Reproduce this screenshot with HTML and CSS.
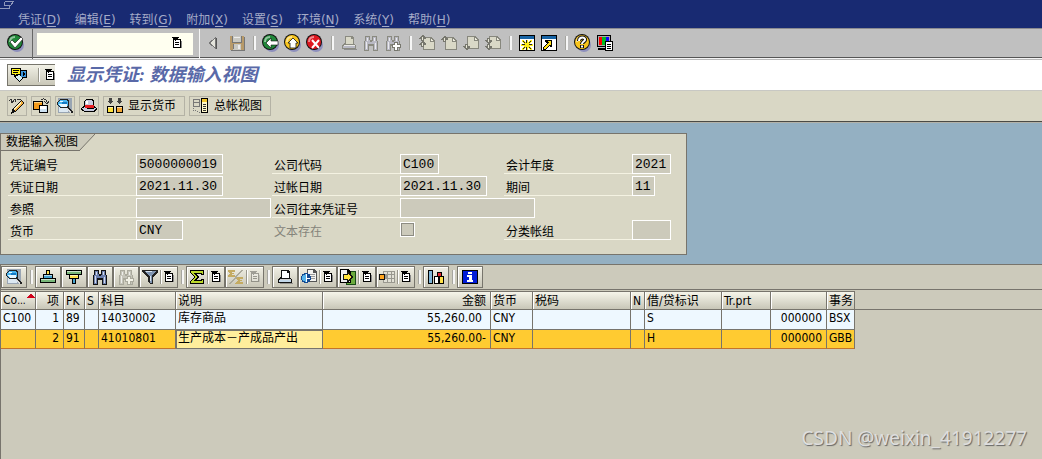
FILE: index.html
```html
<!DOCTYPE html>
<html lang="zh-CN">
<head>
<meta charset="utf-8">
<title>显示凭证: 数据输入视图</title>
<link rel="stylesheet" href="styles.css">
</head>
<body>
<svg class="defs" aria-hidden="true">
  <symbol id="i-list" viewBox="0 0 10 12"><path fill="#888" d="M3 11h7V4h-1v7z"/><path fill="#000" d="M1 2h8v9H1z"/><path fill="#fff" d="M2 3h6v7H2z"/><path fill="#000" d="M0 0h7v1H6v1H5v1H4v1H3V3H2V2H1V1H0zM3 5h4v1H3zM3 7h4v1H3z"/></symbol>
  <symbol id="i-binoc" viewBox="0 0 16 16"><path fill="currentColor" d="M2 1h5v4h2V1h5v4l1 2v9h-5v-5H6v5H1V7l1-2z"/><path fill="var(--fill)" d="M3 2h3v3l1 1h2l1-1V2h3v3l1 2v8h-3V9H5v6H2V7l1-2z"/><path fill="#fff" opacity=".7" d="M4 3h1v3H4zM3 7h1v7H3zM11 3h1v3h-1zM12 8h1v6h-1z"/><path fill="currentColor" d="M7 6h2v1H7z"/></symbol>
  <symbol id="i-printer" viewBox="0 0 16 16"><path fill="currentColor" d="M4 1h7l2 2v6l2 1v4H1v-4l3-2z"/><path fill="var(--paper)" d="M5 2h5v2h2v5H5z"/><path fill="#fff" opacity=".8" d="M3 10h11v1H3z"/><path fill="var(--fill)" d="M2 11h12v2H2z"/><path fill="#777" opacity=".7" d="M3 14h13v1H3z"/></symbol>
  <symbol id="i-page" viewBox="0 0 12 13"><path fill="#87877d" d="M0 0h8l4 4v9H0z"/><path fill="#d9d8c7" d="M1 1h6v4h4v7H1z"/><path fill="#efeee0" d="M8 2l2 2H8z"/></symbol>
  <symbol id="i-up" viewBox="0 0 7 6"><path fill="#77776e" d="M3 0h1l3 3v1H5v2H2V4H0V3z"/><path fill="#e8e7d7" d="M3 2h1v3H3z"/></symbol>
  <symbol id="i-down" viewBox="0 0 7 6"><path fill="#77776e" d="M2 0h3v2h2v1L4 6H3L0 3V2h2z"/><path fill="#e8e7d7" d="M3 1h1v3H3z"/></symbol>
  <symbol id="i-detail" viewBox="0 0 18 16"><path fill="#99a5b3" d="M2 0h14v15H2z"/><path fill="#dce8f2" d="M3 9h9v5H3z"/><path fill="#222" d="M4 1h7l2 2v5l-1 1 5 4v2h-2l-5-5H5L1 7V4z"/><path fill="#48b4ef" d="M4 2h6l2 2v3l-2 2H5L2 7V4z"/><path fill="#e9f8ff" d="M3 6h8v2l-1 1H5zM4 3h3v1H4z"/><path fill="#147ac5" d="M6 4h5v2H6z"/><path fill="#ddd" d="M11 10l4 4-1 1-3-4z"/></symbol>
  <symbol id="i-ball" viewBox="0 0 18 18"><circle cx="10" cy="11" r="7" fill="#8e90bd"/><circle cx="8" cy="8" r="8" fill="#111"/><circle cx="8" cy="8" r="7" fill="var(--ball)"/><path fill="none" stroke="#fff" stroke-opacity=".5" stroke-width="2" d="M3 8c0-3 2-5 5-5"/></symbol>
</svg>

<header class="menubar">
  <svg class="sysicon" viewBox="0 0 14 9" aria-hidden="true"><path fill="none" stroke="#8f98bb" d="M4.500 1.500h9l-3 4h-6v-4M0 8.500h9v-3"/></svg>
  <nav class="menus">
    <button>凭证(<u>D</u>)</button><button>编辑(<u>E</u>)</button><button>转到(<u>G</u>)</button><button>附加(<u>X</u>)</button><button>设置(<u>S</u>)</button><button>环境(<u>N</u>)</button><button>系统(<u>Y</u>)</button><button>帮助(<u>H</u>)</button>
  </nav>
</header>

<section class="sysbar">
  <div class="enter"><button class="tool" aria-label="确认"><svg class="ball green" viewBox="0 0 18 18"><use href="#i-ball"/><path fill="#fff" stroke="#111" stroke-width=".6" d="M3 8l2-2 3 3 6-6 2 2-8 9z"/></svg></button></div>
  <div class="command">
    <div class="combo"><input type="text" aria-label="命令"><button aria-label="历史"><svg class="list"><use href="#i-list"/></svg></button></div>
  </div>
  <div class="tools">
    <button class="tool" aria-label="收起"><svg viewBox="0 0 16 16"><path fill="#e4e4dc" stroke="#777" d="M8.500 2.500v11l-6-5.500z"/><path stroke="#555" d="M9.500 3v11"/></svg></button>
    <button class="tool" aria-label="保存"><svg viewBox="0 0 16 16"><path fill="#b79a6a" d="M1 1h14v14H1z"/><path fill="#c9c9c3" d="M4 1h8v6H4zM4 9h8v6H4z"/><path fill="#777" d="M3 1h1v7H3zM12 1h1v7h-1zM4 7h8v1H4zM15 2h1v14H2v-1h13zM4 9h1v5H4z"/><path fill="#ececec" d="M5 2h6v1H5zM9 10h2v4H9z"/></svg></button>
    <i class="sep"></i>
    <button class="tool" aria-label="返回"><svg class="ball green" viewBox="0 0 18 18"><use href="#i-ball"/><path fill="#fff" stroke="#111" stroke-width=".6" d="M4 9l5-5v3h7v4H9v3z"/></svg></button>
    <button class="tool" aria-label="退出"><svg class="ball yellow" viewBox="0 0 18 18"><use href="#i-ball"/><path fill="#fff" stroke="#111" stroke-width=".8" d="M9 4l5 5h-2v5H6V9H4z"/></svg></button>
    <button class="tool" aria-label="取消"><svg class="ball red" viewBox="0 0 18 18"><use href="#i-ball"/><path fill="none" stroke="#fff" stroke-width="2" d="M6 6l7 8M13 6l-7 8"/></svg></button>
    <i class="sep"></i>
    <button class="tool off" aria-label="打印"><svg viewBox="0 0 16 16"><use href="#i-printer"/></svg></button>
    <button class="tool off" aria-label="查找"><svg viewBox="0 0 16 16"><use href="#i-binoc"/></svg></button>
    <button class="tool off" aria-label="继续查找"><svg viewBox="0 0 16 16"><use href="#i-binoc"/><path fill="#77776e" d="M9 7h4v2h3v4h-3v3H9v-3H7V9h2z"/><path fill="#fff" d="M10 8h2v2h3v2h-3v3h-2v-3H8v-2h2z"/></svg></button>
    <i class="sep"></i>
    <button class="tool" aria-label="首页"><svg viewBox="0 0 16 16"><use href="#i-page" x="4" y="2" width="12" height="13"/><use href="#i-up" x="0" y="0" width="7" height="6"/><use href="#i-up" x="0" y="6" width="7" height="6"/></svg></button>
    <button class="tool" aria-label="上一页"><svg viewBox="0 0 16 16"><use href="#i-page" x="4" y="2" width="12" height="13"/><use href="#i-up" x="0" y="1" width="7" height="6"/></svg></button>
    <button class="tool" aria-label="下一页"><svg viewBox="0 0 16 16"><use href="#i-page" x="4" y="1" width="12" height="13"/><use href="#i-down" x="0" y="9" width="7" height="6"/></svg></button>
    <button class="tool" aria-label="末页"><svg viewBox="0 0 16 16"><use href="#i-page" x="4" y="1" width="12" height="13"/><use href="#i-down" x="0" y="3" width="7" height="6"/><use href="#i-down" x="0" y="9" width="7" height="6"/></svg></button>
    <i class="sep"></i>
    <button class="tool" aria-label="新建会话"><svg viewBox="0 0 16 16"><path d="M0 0h16v16H0z"/><path fill="#fff" d="M1 4h14v11H1z"/><path fill="#1764a5" d="M1 1h14v3H1z"/><path fill="#ffed19" d="M3 5h2v1h1v1h1V5h2v2h1V6h1V5h2v2h-1v1h-1v1h3v2h-3v1h1v1h1v2h-2v-1h-1v-1H9v2H7v-2H6v1H5v1H3v-2h1v-1h1v-1H2V9h3V8H4V7H3z"/><path fill="#222" d="M4 6h1v1H4zM5 7h1v1H5zM7 5h1v3H7zM3 9h3v1H3zM10 9h3v1h-3zM10 7h1v1h-1zM11 6h1v1h-1zM5 12h1v1H5zM4 13h1v1H4zM7 12h1v3H7zM10 12h1v1h-1zM11 13h1v1h-1z"/></svg></button>
    <button class="tool" aria-label="快捷方式"><svg viewBox="0 0 16 16"><path d="M0 0h16v16H0z"/><path fill="#fff" d="M1 4h14v11H1z"/><path fill="#1764a5" d="M1 1h14v3H1z"/><path fill="#000" d="M4 5h7v7H9v-2l-4 5H2v-3l4-4-2-1z"/><path fill="#ffe119" d="M5 6h5v5L9 9l-5 5H3v-2l5-5z"/></svg></button>
    <i class="sep"></i>
    <button class="tool" aria-label="帮助"><svg class="ball yellow" viewBox="0 0 18 18"><use href="#i-ball"/><path fill="none" stroke="#111" stroke-width="4" d="M5 7c0-5 7-4 6-1-1 2-3 2-3 4M8 11v3"/><path fill="none" stroke="#fff" stroke-width="2" d="M5 7c0-5 7-4 6-1-1 2-3 2-3 4M8 11.500v2"/></svg></button>
    <button class="tool" aria-label="布局"><svg viewBox="0 0 16 16"><path d="M0 0h14v12H0zM1 13h13v2H1z"/><path fill="#aaa" d="M1 1h12v10H1z"/><path fill="red" d="M2 2h3v8H2z"/><path fill="#0b2" d="M5 2h4v8H5z"/><path fill="#10f" d="M9 2h3v8H9z"/><path d="M8 6h8v10H8z"/><path fill="#fff" d="M9 7h6v8H9z"/><path d="M10 9h4v1h-4zM10 11h4v1h-4zM10 13h4v1h-4z"/></svg></button>
  </div>
</section>

<section class="titlebar">
  <button class="services" aria-label="对象服务"><svg class="icon" viewBox="0 0 16 16"><path d="M0 1h10v2h6v8h-4l-3 4-4-3-1-2H3V8H0z"/><path fill="#fff219" d="M1 2h8v5H5l-1 2V7H1z"/><path d="M2 3h6v1H2zM2 5h5v1H2z"/><path fill="#3994dc" d="M10 4h5v6h-5z"/><path d="M12 5l2 2-2 2z"/><path fill="#d5eef5" d="M5 9l4-1 2 3-2 3-3-2z"/></svg><i></i><svg class="list"><use href="#i-list"/></svg></button>
  <h1>显示凭证: 数据输入视图</h1>
</section>

<section class="appbar">
  <button aria-label="更改"><svg class="icon" viewBox="0 0 16 16"><path fill="none" stroke="#333" d="M0 3l2-2 1 4 3-4 1 3M8 1l4 1"/><path fill="#111" d="M12 2l3 3-9 9-4 2 1-4z"/><path fill="#f7ad36" d="M12 3l2 2-8 8-2-2z"/><path fill="#fff3bd" d="M11 4l1 1-7 7-1-1z"/></svg></button>
  <button aria-label="其他凭证"><svg class="icon" viewBox="0 0 16 16"><path fill="none" stroke="#333" d="M8 2c2-2 5-1 6 2M11.500 3.500L14 6l2-3"/><path d="M0 3h10v9H0z"/><path fill="#f49b1b" d="M1 4h8v7H1z"/><path fill="#ffd27d" d="M1 4h8v1H1z"/><path d="M6 7h9v8H6z"/><path fill="#cde2f2" d="M7 8h7v6H7z"/><path fill="#fff" d="M7 8h6v3H7z"/></svg></button>
  <button aria-label="明细"><svg class="icon wide" viewBox="0 0 18 16"><use href="#i-detail"/></svg></button>
  <button aria-label="抬头"><svg class="icon" viewBox="0 0 16 16"><path d="M5 1h6l2 2v5l3 2v2l-3 2H4l-4-2v-2l3-2V3z"/><path fill="#c8cbe0" d="M5 2h6l1 2v3H4V3zM1 10l3-1 3 2h4l3-1 1 1-3 2H4l-3-2z"/><path fill="#e51d22" d="M4 7h9v3H4z"/><path fill="#fff" d="M5 3h2v3H5z"/></svg></button>
  <button class="label"><svg class="icon" viewBox="0 0 16 16"><path fill="#444" d="M2 0h3v3h2L3.500 6 0 3h2zM11 0h3v3h2l-3.500 3L9 3h2z"/><path d="M0 8h7v7H0zM9 8h7v7H9z"/><path fill="#ffe13a" d="M1 9h5v5H1z"/><path fill="#f4a632" d="M10 9h5v5h-5z"/><path fill="#fff" opacity=".6" d="M1 9h5v1H1zM10 9h5v1h-5z"/></svg>显示货币</button>
  <button class="label"><svg class="icon" viewBox="0 0 16 16"><path fill="#777" d="M0 1h7v8H0z"/><path fill="#d9d7c5" d="M1 2h5v2H1zM1 5h5v3H1z"/><path fill="none" stroke="#777" stroke-dasharray="1 1" d="M.500 10v2l7 3"/><path d="M8 0h7v15H8z"/><path fill="#fff8c9" d="M9 1h5v13H9z"/><path fill="#f3c62d" d="M9 1h5v3H9z"/><path fill="#333" d="M10 6h3v1h-3zM10 8h3v1h-3zM10 10h3v1h-3zM10 12h3v1h-3z"/></svg>总帐视图</button>
</section>

<main>
  <section class="panel">
    <div class="tab"><h2>数据输入视图</h2><svg viewBox="0 0 16 17" aria-hidden="true"><path fill="#cccabb" d="M0 0h16L0 17z"/><path fill="none" stroke="#77746c" d="M16 0L0 17"/></svg></div>
    <form class="fields">
      <label for="f1">凭证编号</label><input id="f1" class="w10" value="5000000019" readonly>
      <label for="f2">公司代码</label><input id="f2" class="w4" value="C100" readonly>
      <label for="f3">会计年度</label><input id="f3" class="w4" value="2021" readonly>
      <label for="f4">凭证日期</label><input id="f4" class="w10" value="2021.11.30" readonly>
      <label for="f5">过帐日期</label><input id="f5" class="w10" value="2021.11.30" readonly>
      <label for="f6">期间</label><input id="f6" class="w2" value="11" readonly>
      <label for="f7">参照</label><input id="f7" class="w16" readonly>
      <label for="f8">公司往来凭证号</label><input id="f8" class="w16" readonly>
      <span></span><span></span>
      <label for="f9">货币</label><input id="f9" class="w5" value="CNY" readonly>
      <label for="f10" class="disabled">文本存在</label><input id="f10" type="checkbox" disabled>
      <label for="f11">分类帐组</label><input id="f11" class="w4" readonly>
    </form>
  </section>

  <section class="alv">
    <div class="alvbar">
      <button aria-label="明细"><svg class="icon wide" viewBox="0 0 18 16"><use href="#i-detail"/></svg></button>
      <i class="sep"></i>
      <button aria-label="升序"><svg class="icon" viewBox="0 0 16 16"><path d="M6 1h4v4h3v4h3v5H0V9h3V5h3z"/><path fill="#ffe34d" d="M7 2h2v3H7z"/><path fill="#46a4cf" d="M4 6h8v3H4z"/><path fill="#78b779" d="M1 10h14v3H1z"/><path fill="#fff" opacity=".6" d="M4 6h8v1H4zM1 10h14v1H1z"/></svg></button>
      <button aria-label="降序"><svg class="icon" viewBox="0 0 16 16"><path d="M0 1h16v5h-3v4h-3v5H6v-5H3V6H0z"/><path fill="#78b779" d="M1 2h14v3H1z"/><path fill="#ffe34d" d="M4 6h8v3H4z"/><path fill="#46a4cf" d="M7 10h2v4H7z"/><path fill="#fff" opacity=".6" d="M1 2h14v1H1zM4 6h8v1H4z"/></svg></button>
      <button aria-label="查找"><svg class="icon" viewBox="0 0 16 16"><use href="#i-binoc"/></svg></button>
      <button class="off" aria-label="继续查找"><svg class="icon" viewBox="0 0 16 16"><use href="#i-binoc"/><path fill="#aaa99c" d="M9 7h4v2h3v4h-3v3H9v-3H7V9h2z"/><path fill="#f2f1e6" d="M10 8h2v2h3v2h-3v3h-2v-3H8v-2h2z"/></svg></button>
      <button class="split" aria-label="过滤"><svg class="icon" viewBox="0 0 16 16"><path fill="#222" d="M0 1h16v2l-5 5v7H8l-2-2V8L0 3z"/><path fill="#8095b2" d="M2 2h12l-4 5v7H8V8z"/><path fill="#d9e4ef" d="M3 2h7v1H4zM8 7h1v5H8z"/></svg><i></i><svg class="list"><use href="#i-list"/></svg></button>
      <i class="sep"></i>
      <button class="split" aria-label="总计"><svg class="icon" viewBox="0 0 16 16"><path d="M1 1h14v5h-3V5H7l4 3-4 3h5v-1h3v5H1v-3l5-4-5-4z"/><path fill="#bcd82d" d="M2 2h12v3h-1V4H4l5 4-5 4h9v-1h1v3H2v-2l5-4-5-4z"/></svg><i></i><svg class="list"><use href="#i-list"/></svg></button>
      <button class="split off" aria-label="小计"><svg class="icon" viewBox="0 0 16 16"><path fill="none" stroke="#c4ab62" stroke-width="2" d="M7 2H1l3 2.500L1 7h6M15 9H9l3 2.500L9 14h6"/><path stroke="#aaa99c" stroke-width="1.500" d="M14 1L2 15"/></svg><i></i><svg class="list"><use href="#i-list"/></svg></button>
      <i class="sep"></i>
      <button class="print" aria-label="打印"><svg class="icon" viewBox="0 0 16 16"><use href="#i-printer"/></svg></button>
      <button class="split" aria-label="视图"><svg class="icon" viewBox="0 0 16 16"><path fill="#555" d="M6 0h7l3 3v10H6z"/><path fill="#f4f4f0" d="M7 1h5v3h3v8H7z"/><path stroke="#999" d="M8 5.500h6M8 7.500h6M8 9.500h6"/><circle cx="5" cy="9" r="5" fill="#164b91"/><path fill="#55b4eb" d="M2 6l3-1v8l-3-1-1-3z"/><path fill="#fff" d="M5 5h1v4h3v1H6v3H5z"/></svg><i></i><svg class="list"><use href="#i-list"/></svg></button>
      <button class="split" aria-label="导出"><svg class="icon" viewBox="0 0 16 16"><path fill="#174a17" d="M6 2h10v14H6z"/><path fill="#6cab3e" d="M7 3h8v12H7z"/><path d="M0 0h8l3 3v11H0z"/><path fill="#eee" d="M1 1h6v3h3v9H1z"/><path fill="#111" d="M3 5h4V3h1l5 5-5 5H7v-2H3z"/><path fill="#ffe23a" d="M4 6h4V5l3 3-3 3v-1H4z"/></svg><i></i><svg class="list"><use href="#i-list"/></svg></button>
      <button class="split" aria-label="布局"><svg class="icon" viewBox="0 0 16 16"><path fill="#99988f" d="M4 2h12v12H4z"/><path fill="#e2e1d6" d="M5 3h3v2H5zM9 3h3v2H9zM13 3h2v2h-2zM9 6h3v3H9zM13 6h2v3h-2zM5 10h3v3H5zM9 10h3v3H9zM13 10h2v3h-2z"/><path fill="#111" d="M0 5h6v6H0z"/><path fill="#ffa51f" d="M1 6h4v4H1z"/></svg><i></i><svg class="list"><use href="#i-list"/></svg></button>
      <i class="sep"></i>
      <button aria-label="图形"><svg class="icon" viewBox="0 0 16 16"><path d="M0 1h5v14H0zM6 7h5v8H6zM9 3h5v4h2v8h-5V8H9z"/><path fill="#7eb5d9" d="M1 2h3v12H1z"/><path fill="#fff" d="M7 8h3v6H7z"/><path fill="#e22630" d="M10 4h3v3h-3z"/><path fill="#ffe14a" d="M12 8h3v6h-3z"/></svg></button>
      <i class="sep"></i>
      <button aria-label="信息"><svg class="icon" viewBox="0 0 16 16"><path d="M0 1h16v14H0z"/><path fill="#001bd8" d="M1 2h14v12H1z"/><path fill="#fff" d="M6 3h4v2H6zM5 6h5v5h1v2H5v-2h2V8H5z"/></svg></button>
    </div>

    <table>
      <colgroup><col class="c35"><col class="c28"><col class="c21"><col class="c14"><col class="c77"><col class="c147"><col class="c168"><col class="c42"><col class="c98"><col class="c14"><col class="c77"><col class="c49"><col class="c56"><col class="c28"><col></colgroup>
      <thead><tr><th class="sorted">Co<small>...</small></th><th class="num">项</th><th>PK</th><th>S</th><th>科目</th><th>说明</th><th class="num">金额</th><th>货币</th><th>税码</th><th>N</th><th>借/贷标识</th><th>Tr.prt</th><th></th><th>事务</th><td></td></tr></thead>
      <tbody>
        <tr><td>C100</td><td class="num">1</td><td>89</td><td></td><td>14030002</td><td>库存商品</td><td class="num plus">55,260.00</td><td>CNY</td><td></td><td></td><td>S</td><td></td><td class="num">000000</td><td>BSX</td><td></td></tr>
        <tr class="hot"><td></td><td class="num">2</td><td>91</td><td></td><td>41010801</td><td class="cursor">生产成本－产成品产出</td><td class="num">55,260.00-</td><td>CNY</td><td></td><td></td><td>H</td><td></td><td class="num">000000</td><td>GBB</td><td></td></tr>
      </tbody>
    </table>
    <footer>CSDN @weixin_41912277</footer>
  </section>
</main>
</body>
</html>
```
FILE: styles.css
```css
* { box-sizing: border-box; }
body {
  margin: 0;
  min-height: 100vh;
  display: flex;
  flex-direction: column;
  background: #94b0c2;
  color: #000;
  font: 12px/16px "Noto Sans", "Noto Sans CJK SC", sans-serif;
}
button, input { font: inherit; color: inherit; margin: 0; padding: 0; border: 0; background: none; border-radius: 0; }
button { display: flex; align-items: center; justify-content: center; flex: none; white-space: nowrap; }
svg { flex: none; shape-rendering: crispEdges; }
.defs { position: absolute; width: 0; height: 0; }
.icon { width: 16px; height: 16px; }
.icon.wide { width: 18px; }
.list { width: 10px; height: 12px; }

.menubar { background: #182a72; height: 28px; display: flex; align-items: flex-start; color: #a5abc8; font-family: "DejaVu Sans", "Noto Sans CJK SC", sans-serif; }
.sysicon { width: 14px; height: 9px; }
.menus { display: flex; gap: 14px; padding: 12px 4px 0; }
.menus u { text-underline-offset: 2px; }

.sysbar {
  display: flex;
  height: 32px;
  background: #c0c0c0;
  border-top: 1px solid #8b8b90;
  border-bottom: 1px solid #bababa;
  box-shadow: inset 0 -1px #f4f4f4, inset 0 -2px #555;
}
.enter { width: 33px; display: flex; justify-content: center; align-items: center; padding-bottom: 2px; border-right: 1px solid #666; }
.command { padding: 4px 6px 4px 4px; border-right: 1px solid #f5f5f5; }
.combo { display: flex; height: 22px; width: 156px; background: #fffff0; }
.combo input { flex: 1; min-width: 0; padding: 0 4px; }
.combo button { width: 32px; height: 20px; }
.tools { display: flex; align-items: center; padding: 0 4px 2px; }
.tool { width: 22px; height: 22px; --fill: #b9b9c4; --paper: #d9d8c7; }
.tool svg { width: 16px; height: 16px; }
.tool .ball { width: 18px; height: 18px; shape-rendering: auto; }
.green { --ball: #21883a; }
.yellow { --ball: #f8c51d; }
.red { --ball: #df1720; }
.tool.off { color: #8a8a80; }
.sep { width: 12px; height: 14px; display: flex; justify-content: center; }
.sep::before { content: ""; width: 2px; background: #f6f6f6; border-left: 1px solid #a5a5a0; }

.titlebar { display: flex; align-items: center; gap: 12px; height: 31px; padding: 0 7px; background: #fff; border-bottom: 1px solid #c8c8c4; }
.services { width: 48px; height: 22px; justify-content: flex-start; gap: 5px; padding-left: 3px; overflow: hidden; background: linear-gradient(#f1f0e6, #c9c7b8); border: 1px solid #77756c; border-right: 0; }
.services i, .split i { width: 2px; height: 14px; background: #fff; border-left: 1px solid #99978c; }
.services i { margin-left: 6px; }
h1 { margin: 0; font: italic bold 18px/24px "Liberation Serif", "Noto Sans CJK SC", sans-serif; color: #5969a8; }

.appbar { display: flex; align-items: center; gap: 4px; height: 31px; padding: 0 7px; background: #d9d7c5; border-bottom: 1px solid #4b4a45; }
.appbar button { width: 20px; height: 20px; border: 1px solid #b4b2a5; }
.appbar .label { width: 82px; gap: 5px; justify-content: flex-start; padding-left: 3px; }

main { flex: 1; display: flex; flex-direction: column; padding-top: 10px; border-top: 1px solid #b3b2a8; }
.panel { width: 687px; max-width: 100%; padding-bottom: 14px; background: #d9d7c5; border: 1px solid #77746c; }
.tab { display: flex; height: 17px; }
.tab h2 { margin: 0; padding: 0 1px 0 5px; font-size: 12px; line-height: 16px; font-weight: normal; background: #cccabb; border-bottom: 1px solid #77746c; }
.tab svg { width: 16px; height: 17px; shape-rendering: auto; }
.fields { display: grid; grid-template-columns: 128px 136px 128px 104px 128px 1fr; row-gap: 2px; padding: 3px 7px 0; }
.fields label { height: 20px; padding: 3px 2px 0; line-height: 18px; border-bottom: 1px solid #f4f2e2; white-space: nowrap; }
.fields .disabled { color: #85847b; border-color: transparent; }
.fields input { height: 20px; padding: 0 2px; border: 1px solid #fff; background: #cccabb; font: 13px/18px "Liberation Mono", monospace; }
.w16 { width: 135px; }
.w10 { width: 87px; }
.w5 { width: 47px; }
.w4 { width: 39px; }
.w2 { width: 23px; }
.fields input[type="checkbox"] { appearance: none; width: 15px; height: 15px; margin-top: 2px; box-shadow: inset 0 0 0 1px #8d8c83; }

.alv { flex: 1; display: flex; flex-direction: column; margin-top: 9px; background: #cccabb; border-top: 1px solid #77746c; border-left: 1px solid #77746c; }
.alvbar { display: flex; align-items: center; height: 25px; border-bottom: 1px solid #77746c; }
.alvbar button { width: 26px; height: 22px; color: #111; --fill: #6d80ae; --paper: #fff; background: linear-gradient(#f0efe4, #c8c6b7); border: 1px solid #77756c; box-shadow: inset 1px 1px #fff; }
.alvbar .split { width: 39px; gap: 2px; padding-right: 1px; }
.alvbar .off { color: #aaa99c; --fill: #c6c5ba; }
.alvbar .print { --fill: #c3d8ea; }
.alvbar .off .list { opacity: .3; }
.alvbar .sep { width: 8px; }

table { width: 100%; margin-top: 1px; table-layout: fixed; border-collapse: separate; border-spacing: 0; font-family: "DejaVu Sans Condensed", "Noto Sans CJK SC", sans-serif; }
.c14 { width: 14px; } .c21 { width: 21px; } .c28 { width: 28px; } .c35 { width: 35px; } .c42 { width: 42px; }
.c49 { width: 49px; } .c56 { width: 56px; } .c77 { width: 77px; } .c98 { width: 98px; } .c147 { width: 147px; } .c168 { width: 168px; }
th, td { height: 19px; padding: 0 1px 0 2px; line-height: 16px; font-weight: normal; text-align: left; white-space: nowrap; overflow: hidden; border-right: 1px solid #77746c; border-bottom: 1px solid #77746c; }
th { background: linear-gradient(#f6f5ea, #c8c6b7); box-shadow: inset 1px 0 #fff; border-top: 1px solid #77746c; }
th small { font-size: 10px; }
tbody td { height: 20px; padding-bottom: 3px; background: #eef8ff; }
tbody .hot td { height: 19px; padding-bottom: 2px; background: #ffcb31; border-bottom-color: #c4742a; }
thead td { border-right: 0; }
tbody tr td:last-child, tbody .hot td:last-child { background: none; border: 0; }
.num { text-align: right; padding-right: 4px; }
.plus { padding-right: 8px; }
th.sorted { background: linear-gradient(135deg, transparent 50%, #d0021b 50%) 26px 2px / 4px 4px no-repeat, linear-gradient(225deg, transparent 50%, #d0021b 50%) 30px 2px / 4px 4px no-repeat, linear-gradient(#f6f5ea, #c8c6b7); }
tbody .hot .cursor { background: #ffee9c; outline: 1px solid #77746c; outline-offset: -1px; }
footer { margin-top: auto; padding: 0 15px 8px; text-align: right; font: 19px/26px "Noto Sans", sans-serif; color: #dedede; text-shadow: 1px 1px 1px #666; }
```
